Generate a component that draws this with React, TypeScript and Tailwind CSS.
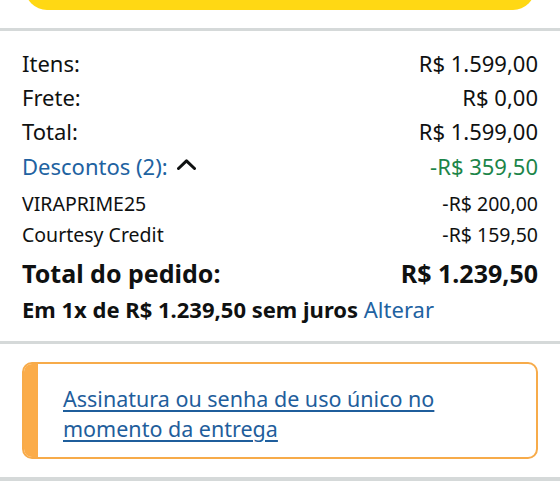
import React from 'react';

const font = { fontFamily: '"Noto Sans", "Open Sans", Arial, sans-serif' };

type Line = { label: string; value: string };

const lines: Line[] = [
  { label: 'Itens:', value: 'R$ 1.599,00' },
  { label: 'Frete:', value: 'R$ 0,00' },
  { label: 'Total:', value: 'R$ 1.599,00' },
];

const discounts: Line[] = [
  { label: 'VIRAPRIME25', value: '-R$ 200,00' },
  { label: 'Courtesy Credit', value: '-R$ 159,50' },
];

function Divider({ thick = 'h-[3px]' }: { thick?: string }) {
  return <div className={`${thick} w-full bg-[#d5d9d9]`} />;
}

function Caret() {
  return (
    <svg width="19" height="11" viewBox="0 0 19 11" className="mb-[4px]">
      <polyline
        points="1.5,9.5 9.5,1.8 17.5,9.5"
        fill="none"
        stroke="#0f1111"
        strokeWidth="3"
        strokeLinecap="round"
        strokeLinejoin="round"
      />
    </svg>
  );
}

export default function App() {
  return (
    <div className="w-[560px] h-[500px] overflow-hidden bg-white text-[#0f1111]" style={font}>
      {/* bottom edge of the checkout button */}
      <div className="px-[25px] h-[10px] overflow-hidden">
        <div className="h-[44px] -mt-[34px] rounded-full bg-[#ffd814]" />
      </div>

      <div className="h-[18px]" />
      <Divider />

      <section className="px-[22px] pt-[15px]">
        {lines.map((l) => (
          <div key={l.label} className="flex justify-between text-[22px] leading-[34px]">
            <span>{l.label}</span>
            <span>{l.value}</span>
          </div>
        ))}

        <div className="flex justify-between text-[22px] leading-[36px]">
          <span className="flex items-center gap-[9px] text-[#2162a1]">
            Descontos (2):
            <Caret />
          </span>
          <span className="text-[#1c8549]">-R$ 359,50</span>
        </div>

        <div className="mt-[4px]">
          {discounts.map((d) => (
            <div key={d.label} className="flex justify-between text-[19.5px] leading-[31px]">
              <span>{d.label}</span>
              <span>{d.value}</span>
            </div>
          ))}
        </div>

        <div className="flex justify-between text-[25px] font-bold leading-[40px] mt-[3px]">
          <span>Total do pedido:</span>
          <span>R$ 1.239,50</span>
        </div>

        <p className="text-[22px] leading-[32px]">
          <span className="font-bold">Em 1x de R$ 1.239,50 sem juros</span>{' '}
          <a className="text-[#2162a1]">Alterar</a>
        </p>
      </section>

      <div className="h-[16px]" />
      <Divider />

      <div className="px-[22px] pt-[18px] pb-[18px]">
        <div className="flex rounded-[10px] border-2 border-[#f7ab4a] overflow-hidden">
          <div className="w-[14px] bg-[#fbac49]" />
          <div className="flex-1 pl-[25px] pr-[50px] pt-[20px] pb-[13px]">
            <a className="text-[21.5px] leading-[30px] text-[#1f5e9c] underline underline-offset-[3px]">
              Assinatura ou senha de uso único no momento da entrega
            </a>
          </div>
        </div>
      </div>

      <Divider thick="h-[4px]" />
    </div>
  );
}
